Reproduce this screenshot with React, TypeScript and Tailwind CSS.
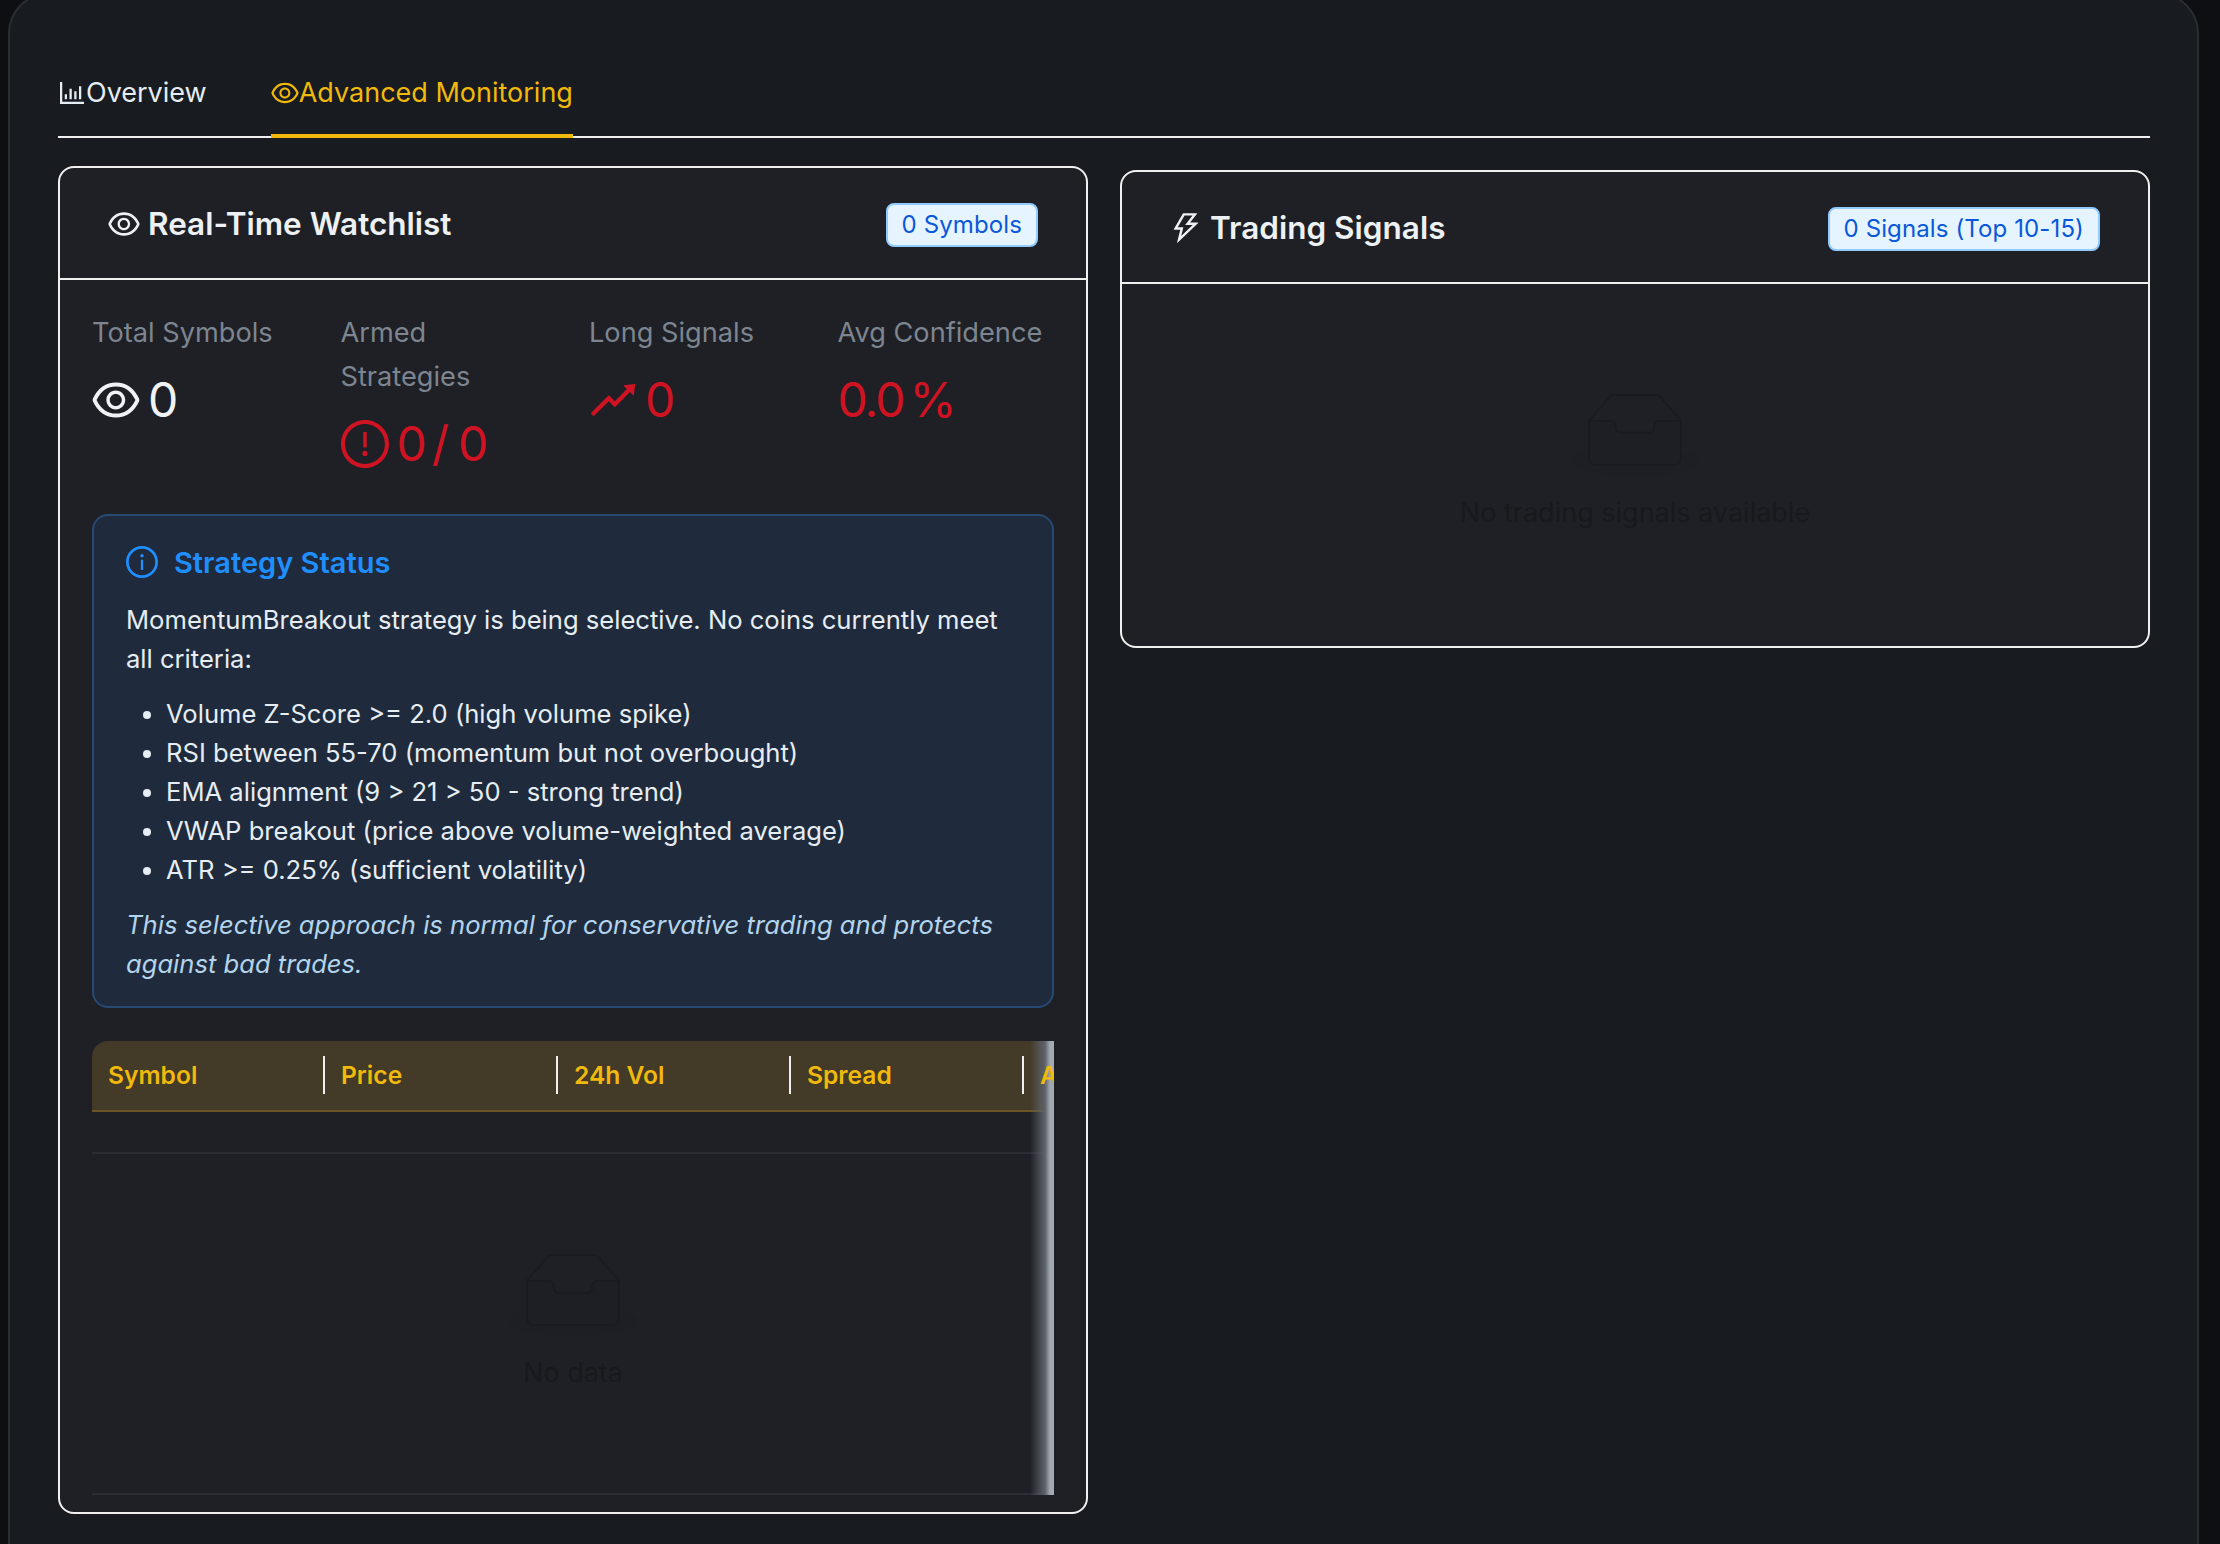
import { AiOutlineBarChart, AiOutlineExclamationCircle, AiOutlineEye, AiOutlineInfoCircle, AiOutlineRise, AiOutlineThunderbolt } from "react-icons/ai";

const box = "64 64 896 896";

function EmptyBox({ text }: { text: string }) {
  return (
    <div className="flex flex-col items-center">
      <svg width="128" height="82" viewBox="0 0 64 41" className="mb-4">
        <g transform="translate(0 1)" fill="none" fillRule="evenodd">
          <ellipse fill="#1d1f24" cx="32" cy="33" rx="32" ry="7" />
          <g fillRule="nonzero" stroke="#191b1f">
            <path d="M55 12.76L44.854 1.258C44.367.474 43.656 0 42.907 0H21.093c-.749 0-1.46.474-1.947 1.257L9 12.761V22h46v-9.24z" />
            <path
              d="M41.613 15.931c0-1.605.994-2.93 2.227-2.931H55v18.137C55 33.26 53.68 35 52.05 35h-40.1C10.32 35 9 33.259 9 31.137V13h11.16c1.233 0 2.227 1.323 2.227 2.928v.022c0 1.605 1.005 2.901 2.237 2.901h14.752c1.232 0 2.237-1.308 2.237-2.913v-.007z"
              fill="#1d1f24"
            />
          </g>
        </g>
      </svg>
      <div className="text-[#17191d] text-[27px] leading-[44px]">{text}</div>
    </div>
  );
}

function Badge({ children }: { children: string }) {
  return (
    <span className="h-[44px] px-[14px] rounded-lg border-2 border-[#91caff] bg-[#e6f4ff] text-[#0958d9] text-2xl tracking-[0.12px] leading-[40px] whitespace-nowrap">
      {children}
    </span>
  );
}

function Stat({ label, children, tone }: { label: string; children: React.ReactNode; tone: string }) {
  return (
    <div>
      <div className="text-[#7d8590] text-[27.2px] leading-[44px] mb-[7px]">{label}</div>
      <div className={`flex items-center text-5xl leading-[76px] ${tone}`}>{children}</div>
    </div>
  );
}

const headers = ["Symbol", "Price", "24h Vol", "Spread", "Age"];

export default function App() {
  return (
    <div className="h-[1544px] overflow-hidden bg-[#0d0f12] pl-2 pr-[21px] font-['Inter',sans-serif]">
      <div className="-mt-[7px] h-[1600px] rounded-t-[40px] border-x-2 border-t-2 border-[#2a2d32] bg-[#181b20] pl-[48px] pr-[47px] pt-[51px]">
        <div className="flex gap-[64px] border-b-2 border-[#f0f0f0] h-[92px]">
          <div className="flex items-center h-[92px] pt-[2px] text-[27px] text-[#e6edf3]">
            <AiOutlineBarChart size={28} viewBox={box} />
            Overview
          </div>
          <div className="relative flex items-center h-[92px] pt-[2px] text-[27px] text-[#f0b90b]">
            <AiOutlineEye size={28} viewBox={box} />
            Advanced Monitoring
            <span className="absolute inset-x-0 bottom-0 h-1 bg-[#f0b90b]" />
          </div>
        </div>

        <div className="grid grid-cols-2 gap-8 items-start mt-7">
          <section className="rounded-2xl border-2 border-[#f0f0f0] bg-[#1e2025] overflow-hidden">
            <header className="h-[112px] pt-[3px] flex items-center justify-between px-[48px] border-b-2 border-[#f0f0f0]">
              <div className="flex items-center gap-2 mb-[2px] text-[31.5px] font-semibold text-[#eef1f4]">
                <AiOutlineEye size={32} viewBox={box} />
                Real-Time Watchlist
              </div>
              <Badge>0 Symbols</Badge>
            </header>
            <div className="px-8 pt-[31px] pb-[17px]">
              <div className="grid grid-cols-4 gap-x-8">
                <Stat label="Total Symbols" tone="text-[#f0f3f6]">
                  <AiOutlineEye size={48} viewBox={box} className="mr-2" />0
                </Stat>
                <Stat label="Armed Strategies" tone="text-[#cf1322]">
                  <AiOutlineExclamationCircle size={48} viewBox={box} className="mr-2" />
                  <span>0</span>
                  <span className="ml-[5px]">/</span>
                  <span className="ml-[9px]">0</span>
                </Stat>
                <Stat label="Long Signals" tone="text-[#cf1322]">
                  <AiOutlineRise size={48} viewBox={box} className="mr-2" />0
                </Stat>
                <Stat label="Avg Confidence" tone="text-[#cf1322]">
                  <span className="tracking-[-2px]">0.0</span>
                  <span className="ml-[6px]">%</span>
                </Stat>
              </div>

              <div className="mt-[32px] rounded-2xl border-2 border-[#264a74] bg-[#1f2b3c] px-8 pt-6 pb-[23px] text-[25.6px] leading-[39px] text-[#e6edf3]">
                <div className="flex items-center gap-4 h-[44px] text-[29px] text-[#1f8fff] font-semibold mb-4">
                  <AiOutlineInfoCircle size={32} viewBox={box} />
                  Strategy Status
                </div>
                <p>MomentumBreakout strategy is being selective. No coins currently meet all criteria:</p>
                <ul className="list-disc pl-10 my-4">
                  <li>Volume Z-Score &gt;= 2.0 (high volume spike)</li>
                  <li>RSI between 55-70 (momentum but not overbought)</li>
                  <li>EMA alignment (9 &gt; 21 &gt; 50 - strong trend)</li>
                  <li>VWAP breakout (price above volume-weighted average)</li>
                  <li>ATR &gt;= 0.25% (sufficient volatility)</li>
                </ul>
                <p className="italic text-[#b3d4ec]">This selective approach is normal for conservative trading and protects against bad trades.</p>
              </div>

              <div className="relative mt-[33px] overflow-hidden rounded-tl-2xl">
                <div className="flex h-[71px] w-[1200px] bg-[#433a28] border-b-2 border-[#6b5526]">
                  {headers.map((h, i) => (
                    <div key={h} className="relative z-10 w-[233px] flex items-center px-4 text-[#f0b90b] text-[24.6px] font-semibold">
                      {h}
                      {i < 4 && <span className="absolute right-0 top-[15px] h-[38px] w-[2px] bg-[#f0f0f0]" />}
                    </div>
                  ))}
                </div>
                <div className="h-[42px] border-b-2 border-[#2a2d33]" />
                <div className="h-[341px] flex items-center justify-center border-b-2 border-[#2a2d33]">
                  <EmptyBox text="No data" />
                </div>
                <div className="absolute inset-y-0 right-0 w-[24px] bg-[linear-gradient(to_left,#a3a9b0_0,#a3a9b0_4px,#5d6269_9px,transparent_24px)]" />
              </div>
            </div>
          </section>

          <section className="mt-1 rounded-2xl border-2 border-[#f0f0f0] bg-[#1e2025] overflow-hidden">
            <header className="h-[112px] pt-[3px] flex items-center justify-between px-[48px] border-b-2 border-[#f0f0f0]">
              <div className="flex items-center gap-2 mb-[2px] text-[31.5px] font-semibold text-[#eef1f4]">
                <AiOutlineThunderbolt size={32} viewBox={box} />
                Trading Signals
              </div>
              <Badge>0 Signals (Top 10-15)</Badge>
            </header>
            <div className="pt-[109px] pb-[111px]">
              <EmptyBox text="No trading signals available" />
            </div>
          </section>
        </div>
      </div>
    </div>
  );
}
